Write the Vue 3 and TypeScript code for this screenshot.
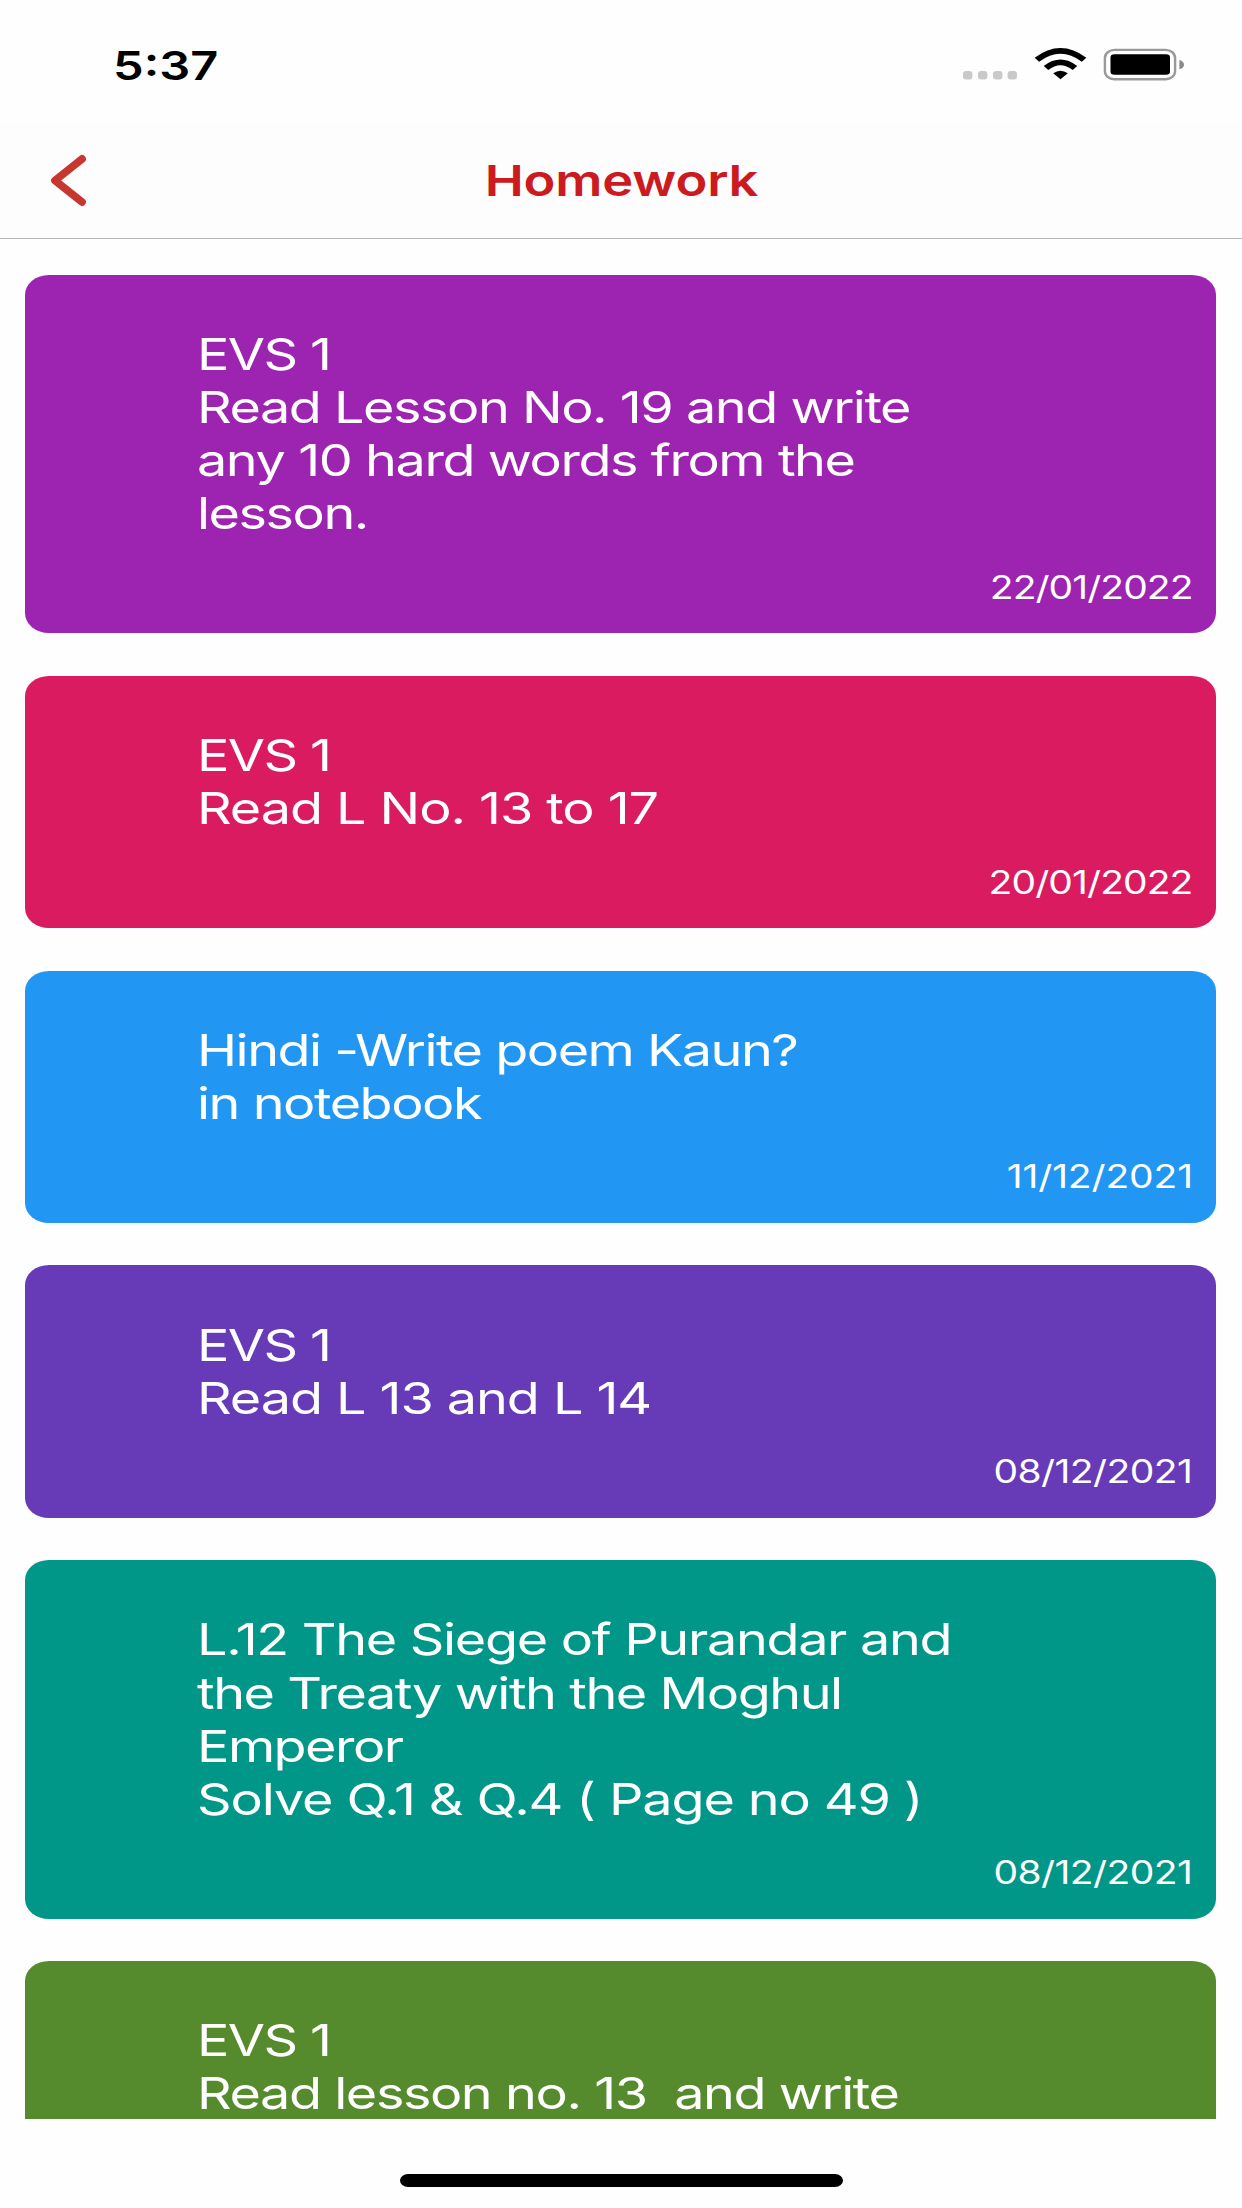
<script setup lang="ts">
interface Line {
  text: string
  tracking: number
}
interface Homework {
  tone: string
  lines: Line[]
  date?: Line
}

const line = (text: string, tracking = 0): Line => ({ text, tracking })

const items: Homework[] = [
  {
    tone: 'purple',
    lines: [
      line('EVS 1', -1.3),
      line('Read Lesson No. 19 and write', -1.2),
      line('any 10 hard words from the', -1.16),
      line('lesson.', -1.2),
    ],
    date: line('22/01/2022', -0.75),
  },
  {
    tone: 'pink',
    lines: [line('EVS 1', -1.3), line('Read L No. 13 to 17', -0.87)],
    date: line('20/01/2022', -0.72),
  },
  {
    tone: 'blue',
    lines: [line('Hindi -Write poem Kaun?', -1.22), line('in notebook', -1.2)],
    date: line('11/12/2021', -0.1),
  },
  {
    tone: 'indigo',
    lines: [line('EVS 1', -1.3), line('Read L 13 and L 14', -0.87)],
    date: line('08/12/2021', -0.45),
  },
  {
    tone: 'teal',
    lines: [
      line('L.12 The Siege of Purandar and', -1.08),
      line('the Treaty with the Moghul', -1.2),
      line('Emperor', -1.25),
      line('Solve Q.1 & Q.4 ( Page no 49 )', -0.92),
    ],
    date: line('08/12/2021', -0.45),
  },
  {
    tone: 'green',
    lines: [line('EVS 1', -1.3), line('Read lesson no. 13  and write', -1.17)],
  },
]
</script>

<template>
  <div class="screen">
    <div class="status">
      <span class="time">5:37</span>
      <svg class="indicators" width="224" height="40" viewBox="0 0 224 40">
        <g fill="#c9c9c9">
          <rect x="3" y="26" width="9.4" height="8.4" rx="3" />
          <rect x="18" y="26" width="9.4" height="8.4" rx="3" />
          <rect x="33" y="26" width="9.4" height="8.4" rx="3" />
          <rect x="47.6" y="26" width="9.4" height="8.4" rx="3" />
        </g>
        <g transform="translate(100.5 34.6) scale(1.217 1)">
          <path d="M0 -0.4 L-6 -6.3 Q0 -11.4 6 -6.3 Z" fill="#000" />
          <path d="M-11.9 -11.6 Q0 -22.8 11.9 -11.6" fill="none" stroke="#000" stroke-width="5.4" />
          <path d="M-19.4 -19.8 Q0 -37.6 19.4 -19.8" fill="none" stroke="#000" stroke-width="5.4" />
        </g>
        <rect x="144.9" y="4.9" width="70.2" height="29.4" rx="9.5" ry="8" fill="none" stroke="#999" stroke-width="2.4" />
        <rect x="150.5" y="9.2" width="59.5" height="20.6" rx="4" ry="3.2" fill="#000" />
        <path d="M219.4 15 Q224 16.5 224 19.7 T219.4 24.3 Z" fill="#8a8a8a" />
      </svg>
    </div>
    <header class="nav">
      <svg class="back" width="40" height="56" viewBox="0 0 40 56">
        <path d="M32 6 L5 27.5 L32 49" fill="none" stroke="#c7372f" stroke-width="7.8" stroke-linecap="round" stroke-linejoin="round" />
      </svg>
      <h1 class="title">Homework</h1>
    </header>
    <main class="list">
      <article v-for="(item, i) in items" :key="i" class="card" :class="item.tone">
        <p v-for="(l, j) in item.lines" :key="j" class="line" :style="{ letterSpacing: l.tracking + 'px' }">{{ l.text }}</p>
        <time v-if="item.date" class="date" :style="{ letterSpacing: item.date.tracking + 'px' }">{{ item.date.text }}</time>
      </article>
    </main>
    <footer class="home"><div class="bar"></div></footer>
  </div>
</template>

<style>
body {
  margin: 0;
  background: #fefefe;
}
</style>

<style scoped>
.screen {
  width: 1242px;
  height: 2208px;
  display: flex;
  flex-direction: column;
  overflow: hidden;
  background: #fefefe;
  font-family: Inter, 'Liberation Sans', sans-serif;
}
.status {
  height: 123px;
  flex: none;
  display: flex;
  justify-content: space-between;
  box-sizing: border-box;
  padding: 45px 58px 0 113px;
}
.time {
  font-size: 40px;
  line-height: 42px;
  font-weight: 560;
  transform: scaleX(1.2174);
  transform-origin: 0 0;
}
.indicators {
  flex: none;
}
.nav {
  height: 116px;
  flex: none;
  box-sizing: border-box;
  display: grid;
  grid-template-columns: 50px 1fr 99px;
  align-items: center;
  background: #fdfdfd;
  border-bottom: 1px solid #b8b8b8;
  padding-left: 50px;
}
.title {
  margin: 0;
  padding-bottom: 1px;
  font-size: 43px;
  line-height: 52px;
  font-weight: 570;
  letter-spacing: -0.1px;
  color: #cb1a20;
  text-align: center;
  transform: scaleX(1.2174);
}
.list {
  height: 1880px;
  flex: none;
  box-sizing: border-box;
  padding: 36px 26px 0 25.4px;
  display: flex;
  flex-direction: column;
  gap: 42.5px;
  overflow: hidden;
}
.card {
  flex: none;
  display: flex;
  flex-direction: column;
  align-items: flex-start;
  box-sizing: border-box;
  padding: 53.2px 23.2px 25.5px 172px;
  border-radius: 24px / 20px;
  color: #fff;
}
.line {
  margin: 0;
  font-size: 44.3px;
  line-height: 53.1px;
  white-space: pre;
  transform: scaleX(1.2174);
  transform-origin: 0 0;
}
.date {
  align-self: flex-end;
  margin-top: 27.4px;
  font-size: 32px;
  line-height: 40px;
  transform: scaleX(1.2174);
  transform-origin: 100% 0;
}
.purple { background: #9c24b0; }
.pink { background: #da1b60; }
.blue { background: #2196f3; }
.indigo { background: #673ab7; }
.teal { background: #009688; }
.green { background: #558b2d; }
.home {
  flex: 1;
  padding-top: 55px;
}
.bar {
  width: 443px;
  height: 13px;
  margin: 0 auto;
  border-radius: 8px / 6.5px;
  background: #000;
}
</style>
